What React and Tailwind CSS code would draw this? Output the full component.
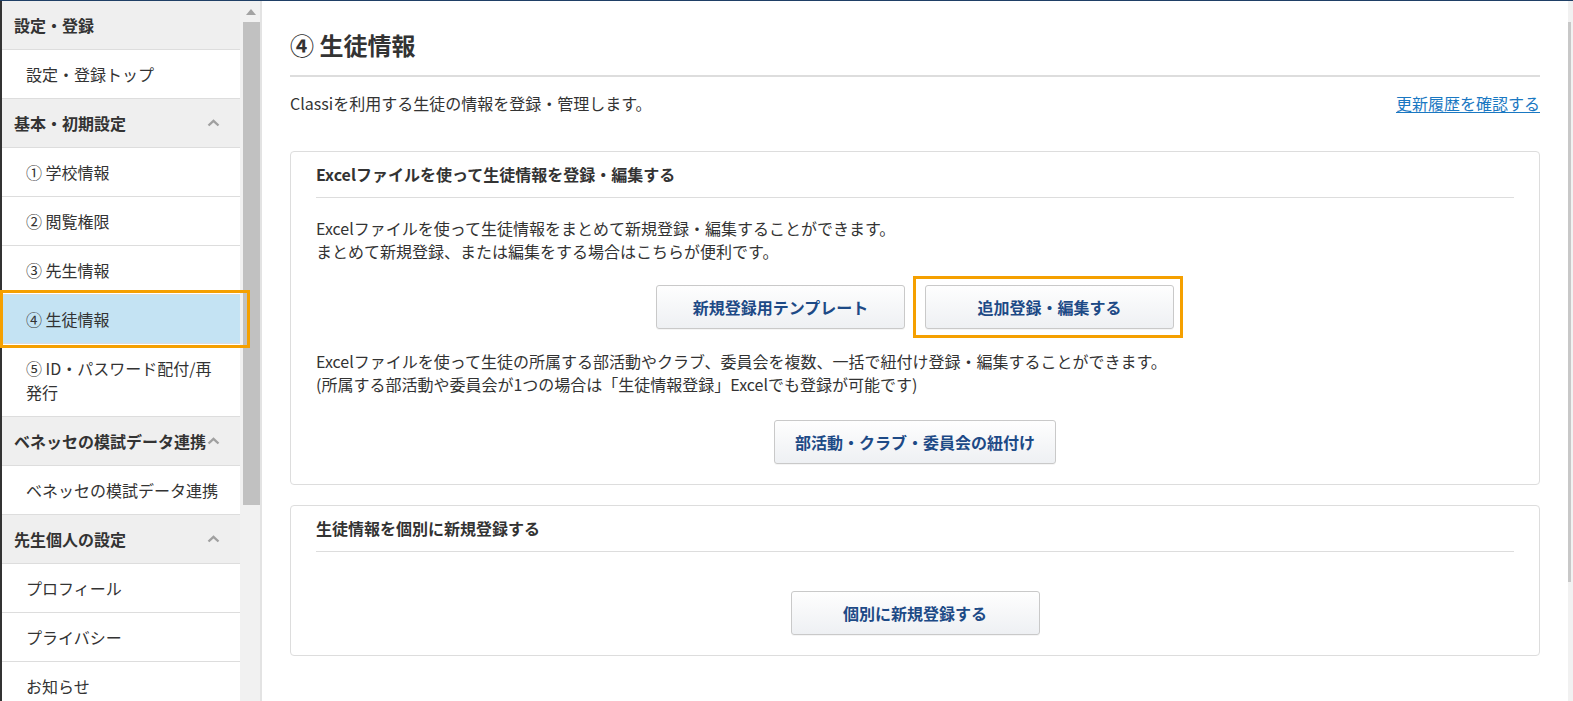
import React from "react";

const menu = [
  { type: "head", label: "設定・登録" },
  { type: "item", label: "設定・登録トップ" },
  { type: "head", label: "基本・初期設定", chevron: true },
  { type: "item", label: "① 学校情報" },
  { type: "item", label: "② 閲覧権限" },
  { type: "item", label: "③ 先生情報" },
  { type: "item", label: "④ 生徒情報", active: true },
  { type: "item", label: "⑤ ID・パスワード配付/再発行" },
  { type: "head", label: "ベネッセの模試データ連携", chevron: true },
  { type: "item", label: "ベネッセの模試データ連携" },
  { type: "head", label: "先生個人の設定", chevron: true },
  { type: "item", label: "プロフィール" },
  { type: "item", label: "プライバシー" },
  { type: "item", label: "お知らせ" },
];

function ChevronUp() {
  return (
    <svg width="13" height="8" viewBox="0 0 13 8" className="shrink-0 ml-auto">
      <path d="M1.5 6.5 L6.5 1.8 L11.5 6.5" fill="none" stroke="#a0a0a0" strokeWidth="2.4" />
    </svg>
  );
}

function Button({ children, highlight }) {
  return (
    <div className="relative">
      <button className="min-w-[249px] h-[44px] px-5 rounded-[3px] border border-[#c9c9c9] bg-gradient-to-b from-[#fefefe] to-[#eef0f3] text-[16px] font-bold text-[#1d4a86] shadow-[0_1px_0_rgba(0,0,0,0.04)]">
        {children}
      </button>
      {highlight && (
        <div className="absolute -left-[12px] -right-[9px] -top-[9px] -bottom-[9px] border-[3px] border-[#f5a000] pointer-events-none" />
      )}
    </div>
  );
}

function Card({ title, children }) {
  return (
    <div className="border border-[#dddddd] rounded-[4px] px-[25px] pb-[20px]">
      <div className="pt-[10px] pb-[11px] border-b border-[#dddddd] text-[16px] leading-6 font-bold text-[#333]">
        {title}
      </div>
      {children}
    </div>
  );
}

export default function App() {
  return (
    <div className="w-[1573px] h-[701px] overflow-hidden flex flex-col bg-white text-[#333] font-['Noto_Sans_CJK_JP',sans-serif]">
      <div className="h-px bg-[#1f3f66] shrink-0" />
      <div className="flex flex-1 min-h-0">
        {/* sidebar */}
        <div className="flex shrink-0 border-l-2 border-[#333]">
          <div className="w-[238px] shrink-0 relative">
            {menu.map((m, i) =>
              m.type === "head" ? (
                <div
                  key={i}
                  className="flex items-center pl-3 pr-[20px] py-3 leading-6 text-[16px] font-bold bg-[#efefef] border-b border-[#dddddd] whitespace-nowrap overflow-hidden"
                >
                  <span>{m.label}</span>
                  {m.chevron && <ChevronUp />}
                </div>
              ) : (
                <div
                  key={i}
                  className={
                    "relative pl-6 pr-[18px] py-3 leading-6 text-[16px] border-b border-[#dddddd] " +
                    (m.active ? "bg-[#c4e3f3]" : "bg-white")
                  }
                >
                  {m.label}
                  {m.active && (
                    <div className="absolute -left-[2px] -right-[10px] -top-[5px] -bottom-[5px] border-[3px] border-[#f5a000] z-10 pointer-events-none" />
                  )}
                </div>
              )
            )}
          </div>
          <div className="w-[22px] shrink-0 bg-[#f1f1f1] border-r-2 border-[#e3e3e3] flex flex-col items-center">
            <svg width="10" height="6" viewBox="0 0 10 6" className="mt-[8px] ml-[2px]">
              <path d="M0 6 L5 0 L10 6 Z" fill="#a3a3a3" />
            </svg>
            <div className="mt-[7px] ml-[2px] w-[17px] h-[483px] bg-[#c1c1c1]" />
          </div>
        </div>

        {/* main */}
        <div className="flex-1 min-w-0 pl-7 pr-[28px] pt-7">
          <h1 className="text-[24px] leading-8 font-bold pb-[14px] border-b-2 border-[#dddddd]">
            ④ 生徒情報
          </h1>
          <div className="flex justify-between items-center mt-[14px] text-[16px] leading-6">
            <p>Classiを利用する生徒の情報を登録・管理します。</p>
            <a href="#" className="text-[#1a78c2] underline underline-offset-2">
              更新履歴を確認する
            </a>
          </div>

          <div className="mt-[36px] flex flex-col gap-[20px]">
            <Card title="Excelファイルを使って生徒情報を登録・編集する">
              <p className="mt-[19px] text-[16px] leading-[23px]">
                Excelファイルを使って生徒情報をまとめて新規登録・編集することができます。
                <br />
                まとめて新規登録、または編集をする場合はこちらが便利です。
              </p>
              <div className="mt-[22px] flex justify-center gap-5">
                <Button>新規登録用テンプレート</Button>
                <Button highlight>追加登録・編集する</Button>
              </div>
              <p className="mt-[21px] text-[16px] leading-[23px]">
                Excelファイルを使って生徒の所属する部活動やクラブ、委員会を複数、一括で紐付け登録・編集することができます。
                <br />
                (所属する部活動や委員会が1つの場合は「生徒情報登録」Excelでも登録が可能です)
              </p>
              <div className="mt-[24px] flex justify-center">
                <Button>部活動・クラブ・委員会の紐付け</Button>
              </div>
            </Card>

            <Card title="生徒情報を個別に新規登録する">
              <div className="mt-[39px] flex justify-center">
                <Button>個別に新規登録する</Button>
              </div>
            </Card>
          </div>
        </div>

        {/* page scrollbar */}
        <div className="w-[5px] shrink-0 bg-[#f1f1f1] pt-[21px]">
          <div className="w-[3px] h-[560px] bg-[#c8c8c8]" />
        </div>
      </div>
    </div>
  );
}
